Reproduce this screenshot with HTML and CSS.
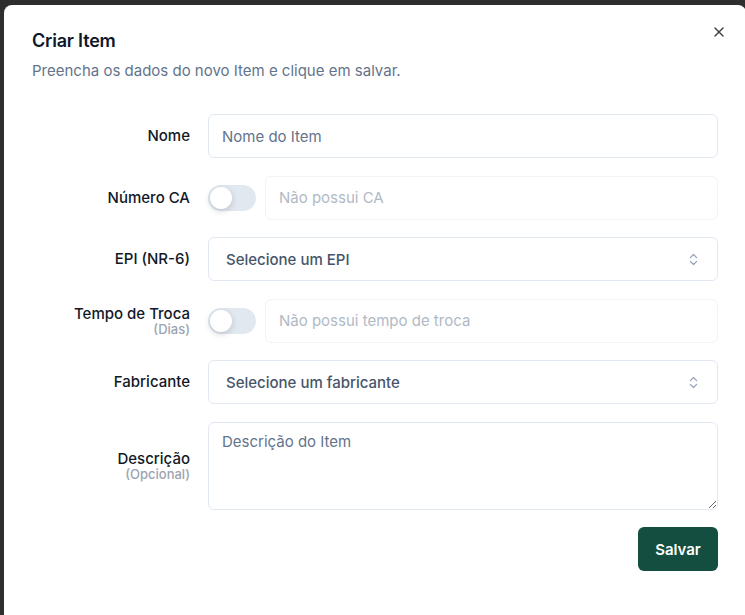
FILE: index.html
```html
<!DOCTYPE html>
<html lang="pt-BR">
<head>
<meta charset="utf-8">
<title>Criar Item</title>
<link rel="stylesheet" href="styles.css">
</head>
<body>
<div class="dialog">
  <button class="close" aria-label="Fechar">
    <svg width="16" height="16" viewBox="0 0 24 24" fill="none" stroke="currentColor" stroke-width="2" stroke-linecap="round" stroke-linejoin="round"><path d="M18 6 6 18"/><path d="m6 6 12 12"/></svg>
  </button>
  <header class="head">
    <h2 class="title">Criar Item</h2>
    <p class="desc">Preencha os dados do novo Item e clique em salvar.</p>
  </header>
  <form class="form">
    <label class="label">Nome</label>
    <div class="field"><input class="input" placeholder="Nome do Item"></div>

    <label class="label">Número CA</label>
    <div class="field with-switch">
      <span class="switch"><span class="thumb"></span></span>
      <input class="input disabled" placeholder="Não possui CA" disabled>
    </div>

    <label class="label">EPI (NR-6)</label>
    <div class="field">
      <div class="select"><span>Selecione um EPI</span>
        <svg width="16" height="16" viewBox="0 0 24 24" fill="none" stroke="currentColor" stroke-width="2" stroke-linecap="round" stroke-linejoin="round"><path d="m7 15 5 5 5-5"/><path d="m7 9 5-5 5 5"/></svg>
      </div>
    </div>

    <label class="label two"><span>Tempo de Troca</span><small>(Dias)</small></label>
    <div class="field with-switch">
      <span class="switch"><span class="thumb"></span></span>
      <input class="input disabled" placeholder="Não possui tempo de troca" disabled>
    </div>

    <label class="label">Fabricante</label>
    <div class="field">
      <div class="select"><span>Selecione um fabricante</span>
        <svg width="16" height="16" viewBox="0 0 24 24" fill="none" stroke="currentColor" stroke-width="2" stroke-linecap="round" stroke-linejoin="round"><path d="m7 15 5 5 5-5"/><path d="m7 9 5-5 5 5"/></svg>
      </div>
    </div>

    <label class="label two"><span>Descrição</span><small>(Opcional)</small></label>
    <div class="field"><textarea class="textarea" placeholder="Descrição do Item"></textarea></div>
  </form>
  <footer class="foot">
    <button class="save" type="button">Salvar</button>
  </footer>
</div>
</body>
</html>
```
FILE: styles.css
```css
* { box-sizing: border-box; }
html, body { margin: 0; height: 100%; }
body {
  background: #2e2e2e;
  font-family: Inter, "Noto Sans", sans-serif;
  overflow: hidden;
  padding: 5px 0 0 4px;
}
.dialog {
  position: relative;
  width: 742px;
  height: 620px;
  background: #fff;
  border-radius: 8px;
  padding: 22px 28px 0 28px;
}
.close {
  position: absolute;
  top: 19px;
  right: 19px;
  border: 0;
  background: none;
  padding: 0;
  color: #3f3f46;
  display: flex;
}
.head { display: flex; flex-direction: column; gap: 6px; }
.title {
  margin: 0;
  font-size: 18px;
  line-height: 28px;
  font-weight: 600;
  color: #0f172a;
  letter-spacing: -0.2px;
}
.desc {
  margin: 0;
  font-size: 15px;
  line-height: 20px;
  color: #64748b;
}
.form {
  margin-top: 33px;
  width: 686px;
  display: grid;
  grid-template-columns: 158px 1fr;
  column-gap: 18px;
  row-gap: 17.5px;
  align-items: center;
}
.label {
  text-align: right;
  font-size: 15px;
  font-weight: 500;
  color: #111827;
  line-height: 20px;
}
.label.two { display: flex; flex-direction: column; align-items: flex-end; }
.label.two span { line-height: 17px; }
.label small {
  font-size: 13px;
  line-height: 15px;
  color: #9ca3af;
  font-weight: 500;
}
.field { display: flex; align-items: center; }
.with-switch { gap: 9px; }
.input, .select, .textarea {
  width: 100%;
  height: 44px;
  border: 1px solid #e2e8f0;
  border-radius: 6px;
  font-family: inherit;
  font-size: 15px;
  color: #0f172a;
  background: #fff;
  outline: none;
}
.input { padding: 0 13px; }
.input::placeholder, .textarea::placeholder { color: #64748b; }
.input.disabled { opacity: 0.5; }
.switch {
  flex: none;
  width: 48px;
  height: 26px;
  border-radius: 13px;
  background: #e2e8f0;
  display: flex;
  align-items: center;
  padding: 2px;
}
.thumb {
  width: 22px;
  height: 22px;
  border-radius: 50%;
  background: #fff;
  box-shadow: 0 2px 6px rgba(15, 23, 42, 0.18);
}
.select {
  display: flex;
  align-items: center;
  justify-content: space-between;
  padding: 0 16px 0 17px;
  color: #475569;
  font-weight: 500;
}
.select svg { color: #94a3b8; width: 15px; height: 15px; }
.textarea {
  height: 88px;
  padding: 9px 13px;
  resize: vertical;
  display: block;
}
.foot {
  display: flex;
  justify-content: flex-end;
  width: 686px;
  margin-top: 17.5px;
}
.save {
  width: 80px;
  height: 44px;
  border: 0;
  border-radius: 6px;
  background: #134e40;
  color: #fff;
  font-family: inherit;
  font-size: 15px;
  font-weight: 600;
}
```
